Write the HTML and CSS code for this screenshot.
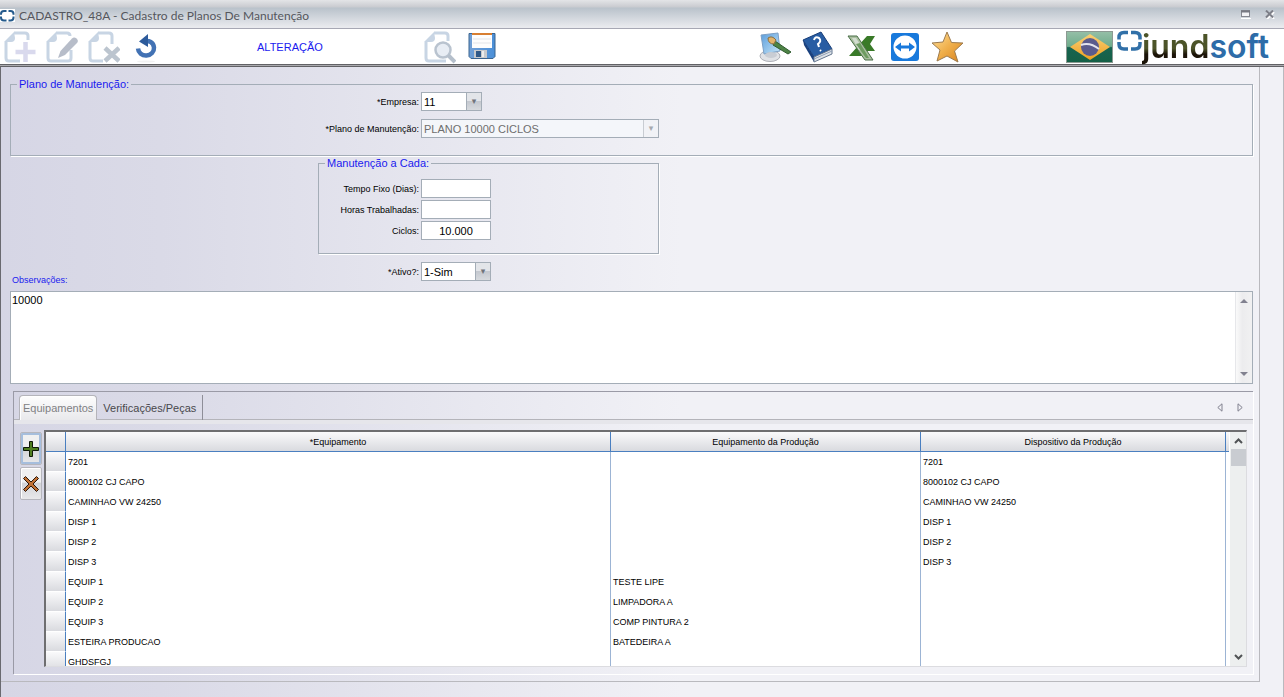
FILE: index.html
```html
<!DOCTYPE html>
<html lang="pt-BR">
<head>
<meta charset="utf-8">
<title>CADASTRO_48A - Cadastro de Planos De Manutenção</title>
<link rel="stylesheet" href="styles.css">
</head>
<body>
<div class="window">
  <header class="titlebar">
    <svg class="app-icon" width="15" height="13" viewBox="0 0 15 13"><rect width="15" height="13" fill="#fff"/><path d="M6.500 2H4Q1 2 1 5v.8M8.500 2H10.500Q13.500 2 13.500 5v.8M6.500 11.500H4Q1 11.500 1 8.500V7.500M8.500 11.500H10.500Q13.500 11.500 13.500 8.500V7.500" fill="none" stroke="#245a8c" stroke-width="2"/></svg>
    <h1 class="title">CADASTRO_48A - Cadastro de Planos De Manutenção</h1>
    <button class="win-btn" aria-label="Restaurar"><svg width="10" height="9" viewBox="0 0 10 9"><path d="M0 8.500h10" stroke="#fff"/><rect x=".5" y=".5" width="8" height="6" fill="#f2f2f5" stroke="#858790"/><path d="M0 1.500h9" stroke="#777982" stroke-width="2"/></svg></button>
    <button class="win-btn" aria-label="Fechar"><svg width="10" height="9" viewBox="0 0 10 9"><path d="M1 1l7 7M8 1L1 8" stroke="#fff" stroke-width="2" transform="translate(1 1)"/><path d="M1 .5l7 7M8 .5L1 7.500" stroke="#7d7f88" stroke-width="2"/></svg></button>
  </header>

  <div class="toolbar">
    <div class="tools tools-edit">
      <button class="tool" aria-label="Novo"><svg width="34" height="34" viewBox="0 0 34 34"><path d="M12 3h11q3 0 3 3v4M4 12v16q0 3 3 3h11" fill="none" stroke="#c8d5e4" stroke-width="3"/><path d="M12 2L2 12h7q4 0 4-4z" fill="#c8d5e4"/><path d="M23.500 12v20M13.500 22h20" stroke="#d9d9ed" stroke-width="4.500"/></svg></button>
      <button class="tool" aria-label="Editar"><svg width="34" height="34" viewBox="0 0 34 34"><path d="M12 3h11q3 0 3 3M4 12v16q0 3 3 3h17q3 0 3-3v-8" fill="none" stroke="#c8d5e4" stroke-width="3"/><path d="M12 2L2 12h7q4 0 4-4z" fill="#c8d5e4"/><path d="M14 28l2.500-7L28 8.500q2-2 4.500 0t.5 4.500L21 25z" fill="#b7bdc9"/></svg></button>
      <button class="tool" aria-label="Excluir"><svg width="34" height="34" viewBox="0 0 34 34"><path d="M12 3h11q3 0 3 3v8M4 12v16q0 3 3 3h10" fill="none" stroke="#c8d5e4" stroke-width="3"/><path d="M12 2L2 12h7q4 0 4-4z" fill="#c8d5e4"/><path d="M19 18l14 13M33 18L19 31" stroke="#bcc5cf" stroke-width="4.500"/></svg></button>
      <button class="tool" aria-label="Desfazer"><svg width="34" height="34" viewBox="0 0 34 34"><ellipse cx="18" cy="31.500" rx="9" ry="1" fill="#f1f1f1"/><path d="M15 11.500q10-2 11 6a8 7.500 0 0 1-16 1" fill="none" stroke="#4272b4" stroke-width="4.500"/><path d="M11 11.500L20 4v13z" fill="#2d5b9b"/></svg></button>
    </div>
    <p class="mode">ALTERAÇÃO</p>
    <div class="tools tools-save">
      <button class="tool" aria-label="Pesquisar"><svg width="34" height="34" viewBox="0 0 34 34"><path d="M12 3h11q3 0 3 3v5M4 12v16q0 3 3 3h17" fill="none" stroke="#c8d5e4" stroke-width="3"/><path d="M12 2L2 12h7q4 0 4-4z" fill="#c8d5e4"/><circle cx="21" cy="20" r="7.500" fill="#e8edf4" stroke="#b9c3cf" stroke-width="2.500"/><path d="M26 25l7 7" stroke="#b5bfcb" stroke-width="4"/></svg></button>
      <button class="tool" aria-label="Salvar"><svg width="34" height="34" viewBox="0 0 34 34"><defs><linearGradient id="disk"><stop stop-color="#72a0d6"/><stop offset="1" stop-color="#4a8fd8"/></linearGradient></defs><path d="M5 3.500h26v23l-2 2H7l-2-2z" fill="url(#disk)" stroke="#3b648f"/><rect x="8" y="3" width="20" height="2" fill="#d87f31"/><rect x="8" y="5" width="20" height="13" fill="#fdfdfd"/><path d="M9 9h18M9 13h18" stroke="#e3e5e9"/><rect x="10" y="20" width="13" height="8" fill="#c9cacd"/><rect x="12" y="21" width="5" height="6" fill="#315987"/><path d="M19 21v6" stroke="#eee" stroke-width="2"/></svg></button>
    </div>
    <div class="tools tools-extra">
      <button class="tool" aria-label="Aparência"><svg width="34" height="34" viewBox="0 0 34 34"><defs><linearGradient id="scr" x2="1" y2="1"><stop stop-color="#5b9ddb"/><stop offset="1" stop-color="#c5e5f8"/></linearGradient></defs><ellipse cx="12" cy="26" rx="10" ry="5.500" fill="#e0e2e6" stroke="#aeb0b7"/><path d="M3 5L20 3l2 18-16 3z" fill="url(#scr)" stroke="#7c9fc4"/><ellipse cx="13" cy="25" rx="6" ry="3" fill="#c9cdd4"/><path d="M17 11l16 11-3 2-15-9z" fill="#4d8345" stroke="#315c30"/><path d="M10 8q4-3 8 2l-2 4q-6 0-6-6z" fill="#e2b36b" stroke="#8a7040"/></svg></button>
      <button class="tool" aria-label="Ajuda"><svg width="34" height="34" viewBox="0 0 34 34"><path d="M2 10L20 2l11 17-18 8z" fill="#285da3" stroke="#173d78"/><path d="M2 10l11 17v5L3 15z" fill="#183f7d"/><path d="M13 27l18-8v5l-18 8z" fill="#dfe3e8" stroke="#667890"/><path d="M13 29l18-8" stroke="#8fa0b6"/><path d="M13 10q1-4 5-2 3 3-1 6l1 3M19 20l1 1" fill="none" stroke="#fff" stroke-width="2"/></svg></button>
      <button class="tool" aria-label="Exportar para Excel"><svg width="34" height="34" viewBox="0 0 34 34"><path d="M31 6h-8L5 26h18l-5-5h13l-5-7z" fill="#397a28"/><path d="M4 6h9l16 24h-8z" fill="#a9bf9f" stroke="#4a6f48"/><path d="M8 8h4l7 11-4 1z" fill="#d3ddd0"/><path d="M12 14l4-1 9 15h-3z" fill="#6d9b61"/></svg></button>
      <button class="tool" aria-label="Acesso remoto"><svg width="34" height="34" viewBox="0 0 34 34"><rect x="4" y="3" width="28" height="28" rx="3" fill="#1879dc"/><circle cx="18" cy="17" r="11.500" fill="#fff"/><path d="M8 17l6-4.500V15.500h8v-3L28 17l-6 4.500v-3h-8v3z" fill="#1879dc"/></svg></button>
      <button class="tool" aria-label="Favoritos"><svg width="34" height="34" viewBox="0 0 34 34"><defs><linearGradient id="gold" x2="1" y2="1"><stop stop-color="#ffe2a0"/><stop offset=".5" stop-color="#f0b04c"/><stop offset="1" stop-color="#d8811c"/></linearGradient></defs><path d="M17 2l4.500 10.500L33 13l-8.500 8L28 32l-11-6-10 5 3-11-8-7 11-1z" fill="url(#gold)" stroke="#9c7b50"/></svg></button>
    </div>
    <div class="brand">
      <svg width="48" height="34" viewBox="0 0 48 34"><defs><linearGradient id="flag" x2="0" y2="1"><stop stop-color="#95bfa7"/><stop offset=".48" stop-color="#6fac8b"/><stop offset=".52" stop-color="#176450"/><stop offset="1" stop-color="#166046"/></linearGradient><linearGradient id="dia" x2="0" y2="1"><stop stop-color="#f8cf76"/><stop offset="1" stop-color="#eda01f"/></linearGradient></defs><rect x=".5" y="1.500" width="46" height="31" fill="url(#flag)" stroke="#8c9992"/><path d="M4 17L24 4l20 13-20 13z" fill="url(#dia)"/><circle cx="24" cy="17" r="9" fill="#5a5b8d"/><path d="M15 15q9-3 18 4" fill="none" stroke="#e4e4ee" stroke-width="2"/></svg>
      <svg class="mark" width="26" height="34" viewBox="0 0 26 34"><path d="M12 2.500H8q-5 0-5 5v2M15 2.500h4q5 0 5 5v2M12 19H8q-5 0-5-5v-2M15 19h4q5 0 5-5v-2" fill="none" stroke="#3170a8" stroke-width="3.500"/></svg>
      <span class="wordmark"><span class="word-dark">jund</span><span class="word-blue">soft</span></span>
    </div>
  </div>

  <main class="client">
    <div class="sheet">
      <fieldset class="group plan">
        <legend>Plano de Manutenção:</legend>
        <div class="field"><label for="empresa">*Empresa:</label><span class="combo combo-s"><select id="empresa"><option>11</option></select></span></div>
        <div class="field"><label for="plano">*Plano de Manutenção:</label><span class="combo combo-l"><select id="plano" disabled><option>PLANO 10000 CICLOS</option></select></span></div>
      </fieldset>
      <fieldset class="group every">
        <legend>Manutenção a Cada:</legend>
        <div class="field"><label for="dias">Tempo Fixo (Dias):</label><input id="dias" type="text"></div>
        <div class="field"><label for="horas">Horas Trabalhadas:</label><input id="horas" type="text"></div>
        <div class="field"><label for="ciclos">Ciclos:</label><input id="ciclos" type="text" value="10.000"></div>
      </fieldset>
      <div class="field active"><label for="ativo">*Ativo?:</label><span class="combo combo-m"><select id="ativo"><option>1-Sim</option></select></span></div>
      <label class="notes-label" for="obs">Observações:</label>
      <div class="notes">
        <textarea id="obs">10000</textarea>
        <div class="notes-scroll">
          <svg width="8" height="4" viewBox="0 0 8 4"><path d="M0 4l4-4 4 4z" fill="#81818f"/></svg>
          <svg width="8" height="4" viewBox="0 0 8 4"><path d="M0 0l4 4 4-4z" fill="#81818f"/></svg>
        </div>
      </div>

      <section class="tabs">
        <div class="tab-row">
          <button class="tab tab-on">Equipamentos</button>
          <button class="tab">Verificações/Peças</button>
          <div class="tab-nav">
            <button aria-label="Aba anterior"><svg width="6" height="9" viewBox="0 0 6 9"><path d="M5 .8v7.400L.8 4.500z" fill="none" stroke="#81818f"/></svg></button>
            <button aria-label="Próxima aba"><svg width="6" height="9" viewBox="0 0 6 9"><path d="M1 .8v7.400l4.200-3.700z" fill="none" stroke="#81818f"/></svg></button>
          </div>
        </div>
        <div class="tab-body">
          <div class="row-tools">
            <button class="row-btn row-add" aria-label="Adicionar"><svg width="16" height="16" viewBox="0 0 16 16"><path d="M6.500 .5h3v6h6v3h-6v6h-3v-6h-6v-3h6z" fill="#4f7f20" stroke="#0f1a08"/></svg></button>
            <button class="row-btn" aria-label="Remover"><svg width="16" height="16" viewBox="0 0 16 16"><path d="M2.500 .5L8 6l5.500-5.500 2 2L10 8l5.500 5.500-2 2L8 10l-5.500 5.500-2-2L6 8 .5 2.500z" fill="#c07034" stroke="#2a1709"/></svg></button>
          </div>
          <div class="grid">
            <div class="grid-view">
              <table>
                <colgroup><col class="c-mark"><col><col class="c-prod"><col class="c-disp"><col class="c-end"></colgroup>
                <thead><tr><th></th><th>*Equipamento</th><th>Equipamento da Produção</th><th>Dispositivo da Produção</th><th></th></tr></thead>
                <tbody>
                  <tr><th></th><td>7201</td><td></td><td>7201</td><td></td></tr>
                  <tr><th></th><td>8000102 CJ CAPO</td><td></td><td>8000102 CJ CAPO</td><td></td></tr>
                  <tr><th></th><td>CAMINHAO VW 24250</td><td></td><td>CAMINHAO VW 24250</td><td></td></tr>
                  <tr><th></th><td>DISP 1</td><td></td><td>DISP 1</td><td></td></tr>
                  <tr><th></th><td>DISP 2</td><td></td><td>DISP 2</td><td></td></tr>
                  <tr><th></th><td>DISP 3</td><td></td><td>DISP 3</td><td></td></tr>
                  <tr><th></th><td>EQUIP 1</td><td>TESTE LIPE</td><td></td><td></td></tr>
                  <tr><th></th><td>EQUIP 2</td><td>LIMPADORA A</td><td></td><td></td></tr>
                  <tr><th></th><td>EQUIP 3</td><td>COMP PINTURA 2</td><td></td><td></td></tr>
                  <tr><th></th><td>ESTEIRA PRODUCAO</td><td>BATEDEIRA A</td><td></td><td></td></tr>
                  <tr><th></th><td>GHDSFGJ</td><td></td><td></td><td></td></tr>
                </tbody>
              </table>
            </div>
            <div class="grid-scroll">
              <svg width="9" height="6" viewBox="0 0 9 6"><path d="M1 5l3.500-3.500L8 5" fill="none" stroke="#505355" stroke-width="2"/></svg>
              <div class="thumb"></div>
              <svg class="down" width="9" height="6" viewBox="0 0 9 6"><path d="M1 1l3.500 3.500L8 1" fill="none" stroke="#505355" stroke-width="2"/></svg>
            </div>
          </div>
        </div>
      </section>
    </div>
  </main>
</div>
</body>
</html>
```
FILE: styles.css
```css
* { box-sizing: border-box; }

body {
  margin: 0;
  font-family: "Liberation Sans", Arial, sans-serif;
  font-size: 9px;
  line-height: 12px;
  color: #000;
}

button { border: 0; padding: 0; background: none; font: inherit; color: inherit; }
svg { display: block; }

.window { display: flex; flex-direction: column; height: 100vh; min-height: 600px; background: #f1f1f6; }

.titlebar {
  display: flex;
  align-items: center;
  flex: none;
  height: 29px;
  padding: 3px 9px 0 0;
  background: linear-gradient(#e3e4e7 0, #c9cbd0 7px, #b9c2cb 8px, #e9eaee 27px);
  border-bottom: 1px solid #a7a8b4;
}
.title { flex: 1; margin: 0 0 0 4px; font: 400 12px/16px Lato, sans-serif; color: #55575d; }
.win-btn { width: 10px; margin-left: 14px; margin-bottom: 3px; }

.toolbar {
  display: flex;
  align-items: center;
  flex: none;
  height: 36px;
  margin-bottom: 2px;
  background: #fff;
  border-bottom: 1px solid #626266;
  box-shadow: 0 1px #aaaaae, 0 2px #626266;
}
.tools { display: flex; gap: 8px; }
.tools-edit { width: 254px; padding-left: 2px; }
.tools-save { width: 337px; padding-left: 1px; }
.tools-extra { gap: 9px; }
.tool { width: 34px; height: 34px; }
.mode { width: 167px; margin: 0; padding-left: 3px; font-size: 11px; line-height: 16px; color: #1a1aef; }
.brand { display: flex; align-items: center; margin-left: auto; padding-right: 15px; }
.mark { margin-left: 2px; }
.wordmark { font: 600 32px/34px Inter, sans-serif; }
.word-dark { color: transparent; background: linear-gradient(#4c5428 55%, #1c1408 70%); -webkit-background-clip: text; background-clip: text; }
.word-blue { color: #2d6ca8; }

.client {
  flex: 1;
  min-height: 0;
  display: flex;
  padding: 0 23px 15px 0;
  border-left: 1px solid #6a6a70;
  border-right: 1px solid #b9b9be;
  background: linear-gradient(90deg, #d6d6e5 0, #dadae7 160px, #f1f1f6 680px);
}
.sheet {
  flex: 1;
  min-width: 0;
  display: flex;
  flex-direction: column;
  padding: 10px 6px 7px 9px;
  border-right: 1px solid #b9b9be;
  border-bottom: 1px solid #b9b9be;
}

.group { min-width: 0; margin: 0; border: 1px solid #a4adb7; box-shadow: 1px 1px #fff; }
.group legend { padding: 0 2px; font-size: 11px; line-height: 14px; color: #1a1aef; }
.plan { flex: none; height: 79px; padding: 1px 0 0; }
.plan legend { margin-left: 6px; }
.plan .field { margin-bottom: 8px; }
.every { flex: none; width: 341px; height: 98px; margin-left: 308px; padding: 9px 0 0; }
.every legend { margin-left: 6px; }
.every .field { margin-bottom: 2px; }

.field { display: flex; align-items: center; gap: 2px; height: 19px; }
.field label { width: 408px; text-align: right; white-space: nowrap; }
.every .field label { width: 100px; }
.active { flex: none; margin-top: 8px; }
.active label { width: 409px; }

.field input, .combo {
  width: 70px;
  height: 19px;
  border: 1px solid #a4adb7;
  background: #fff;
}
.field input { padding: 0 2px; text-align: center; font: 11px/16px "Liberation Sans", sans-serif; }
.combo { display: flex; }
.combo-s { width: 61px; }
.combo-l { width: 238px; background: #f4f6fa; }
.combo select {
  flex: 1;
  min-width: 0;
  appearance: none;
  border: 0;
  padding: 0 2px;
  background: none;
  font: 11px/16px "Liberation Sans", sans-serif;
  color: #000;
}
.combo select:disabled { color: #6e6e6e; opacity: 1; }
.combo::after {
  content: "▾";
  width: 14px;
  border-left: 1px solid #a4adb7;
  background: linear-gradient(#e3e5e9 45%, #c4c8cf 50%, #d7dade);
  font: 9px/17px "DejaVu Sans", sans-serif;
  text-align: center;
  color: #70747b;
  pointer-events: none;
}
.combo-l::after { background: #f1f2f6; border-color: #c8ccd2; color: #a6a9ae; }

.notes-label { flex: none; align-self: flex-start; margin: -7px 0 4px; padding-left: 2px; line-height: 13px; color: #1a1aef; }
.notes { flex: none; display: flex; height: 93px; border: 1px solid #a4adb7; background: #fff; }
.notes textarea { flex: 1; min-width: 0; border: 0; padding: 1px; resize: none; background: none; font: 11px/14px "Liberation Sans", sans-serif; }
.notes-scroll {
  display: flex;
  flex-direction: column;
  justify-content: space-between;
  align-items: center;
  width: 17px;
  padding: 7px 0;
  border-left: 1px solid #e6e7ea;
  background: linear-gradient(90deg, #fafafa, #ececee 40%, #f1f1f2);
}

.tabs {
  flex: 1;
  min-height: 0;
  display: flex;
  flex-direction: column;
  margin: 7px 0 0 3px;
  border: solid #9a9aa6;
  border-width: 1px 0 0 1px;
  box-shadow: 1px 1px #fff;
}
.tab-row { display: flex; flex: none; height: 28px; padding: 3px 10px 0 5px; border-bottom: 1px solid #b4b4ba; }
.tab { height: 25px; padding: 0 6px; border-right: 1px solid #8e8e98; font-size: 11px; line-height: 24px; color: #48484c; }
.tab-on {
  padding: 0 3px;
  border: 1px solid #b4b4ba;
  border-bottom: 0;
  border-radius: 4px 4px 0 0;
  background: linear-gradient(#fdfdfd, #e9e9ec);
  box-shadow: inset 1px 1px #fff;
  color: #808084;
}
.tab-nav { display: flex; align-items: center; gap: 14px; margin-left: auto; }
.tab-body {
  flex: 1;
  min-height: 0;
  display: flex;
  gap: 2px;
  padding: 6px 6px 7px 6px;
  border-top: 4px solid #e6e6eb;
}
.row-tools { display: flex; flex-direction: column; gap: 2px; padding-top: 2px; }
.row-btn {
  display: grid;
  place-items: center;
  width: 22px;
  height: 33px;
  border: 1px solid #b6b6bd;
  border-radius: 2px;
  background: linear-gradient(#f0f0f1 45%, #d3d4d8 50%, #e8e8ea);
  box-shadow: inset 1px 1px #fff;
}
.row-add { box-shadow: inset 0 0 0 2px #a6bedd; }

.grid {
  flex: 1;
  min-width: 0;
  display: flex;
  gap: 1px;
  border: 1px solid #dcdce0;
  border-top: 2px solid #6e6e70;
  border-left: 2px solid #6e6e70;
  background: #fff;
  overflow: hidden;
}
.grid-view { flex: 1; min-width: 0; overflow: hidden; }
table { width: 100%; table-layout: fixed; border-collapse: separate; border-spacing: 0; }
.c-mark { width: 20px; }
.c-prod { width: 310px; }
.c-disp { width: 305px; }
.c-end { width: 3px; }
tr { height: 20px; }
th, td { padding: 0 2px; height: 20px; line-height: 18px; overflow: hidden; white-space: nowrap; text-align: left; }
td { border-right: 1px solid #9cb4d4; }
th { font-weight: 400; border-right: 1px solid #4a7fc0; background: linear-gradient(#fafafb, #d9dadf); }
thead th { text-align: center; border-bottom: 1px solid #4a7fc0; }
tbody th { border-bottom: 1px solid #fff; }
th:last-child, td:last-child { border-right: 0; padding: 0; }

.grid-scroll { display: flex; flex-direction: column; align-items: center; width: 16px; padding: 6px 0; background: #edefef; }
.thumb { width: 15px; height: 17px; margin-top: 5px; background: #c9ccd1; }
.down { margin-top: auto; }
```
